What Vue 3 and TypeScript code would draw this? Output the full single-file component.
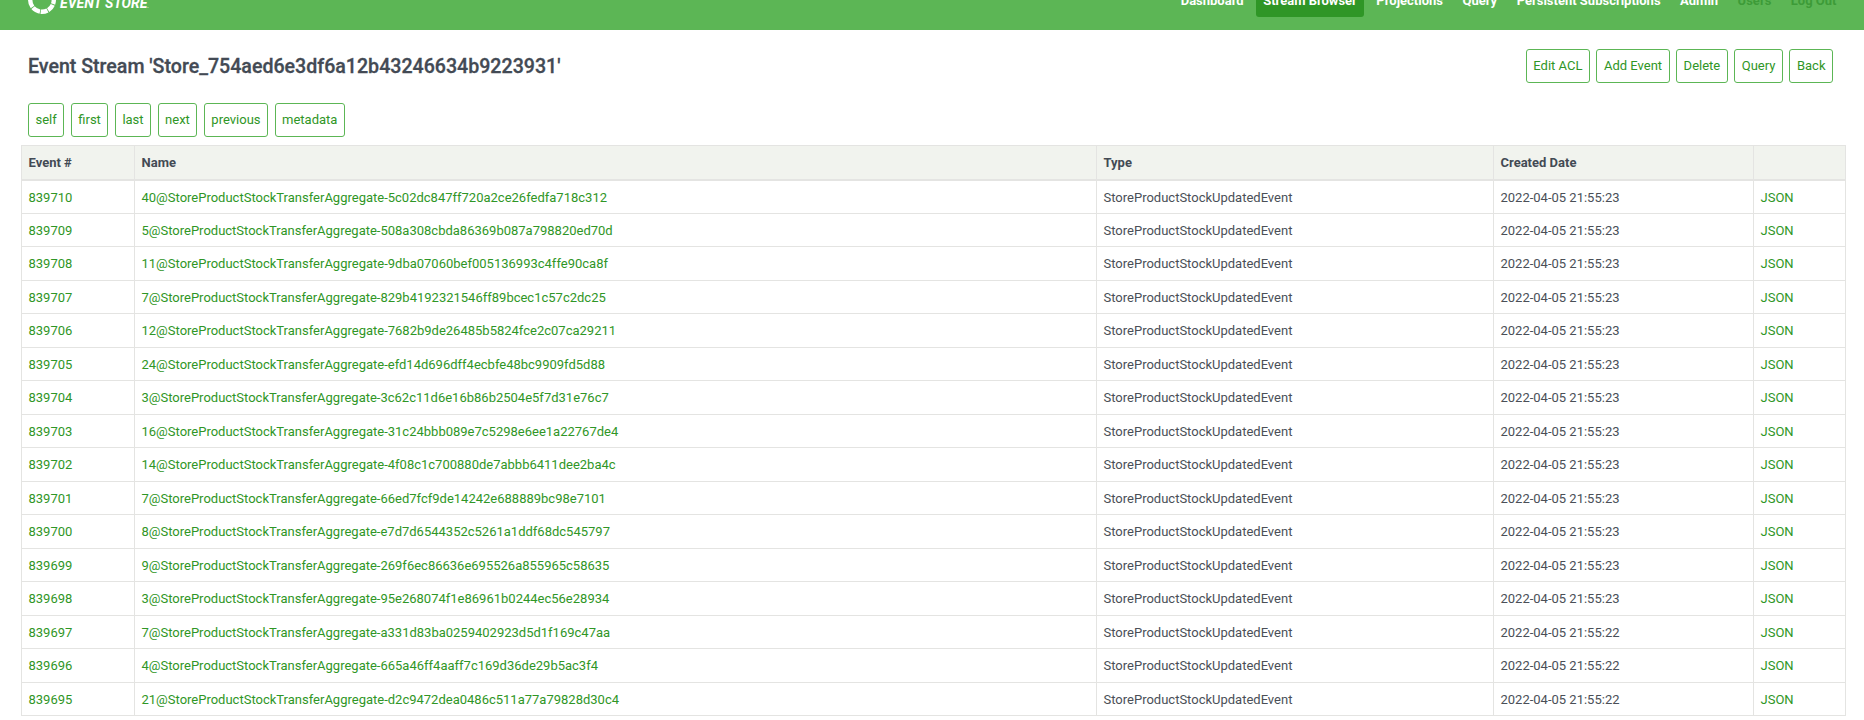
<template>
  <div class="page">
    <header class="topbar">
      <a class="logo" href="#">
        <svg class="ring" width="28" height="16" viewBox="0 0 28 16">
          <path d="M2.2 0A11.8 11.8 0 0 0 25.8 0" fill="none" stroke="#fff" stroke-width="4.4" stroke-dasharray="7.5 0.8 8 0.8 7 0.8 7 0.8 9" />
        </svg>
        <span class="logo-text">EVENT STORE<small>.</small></span>
      </a>
      <nav class="nav">
        <a
          v-for="item in navItems"
          :key="item.label"
          href="#"
          :class="['nav-link', { active: item.active, muted: item.muted }]"
        >{{ item.label }}</a>
      </nav>
    </header>

    <main class="content">
      <div class="title-row">
        <h1>Event Stream 'Store_754aed6e3df6a12b43246634b9223931'</h1>
        <div class="btn-group">
          <a v-for="action in actions" :key="action" class="btn" href="#">{{ action }}</a>
        </div>
      </div>

      <div class="btn-group pager">
        <a v-for="link in pagerLinks" :key="link" class="btn" href="#">{{ link }}</a>
      </div>

      <table class="events">
        <colgroup>
          <col class="col-num" />
          <col class="col-name" />
          <col class="col-type" />
          <col class="col-date" />
          <col />
        </colgroup>
        <thead>
          <tr>
            <th>Event #</th>
            <th>Name</th>
            <th>Type</th>
            <th>Created Date</th>
            <th></th>
          </tr>
        </thead>
        <tbody>
          <tr v-for="row in rows" :key="row.num">
            <td><a href="#">{{ row.num }}</a></td>
            <td><a href="#">{{ row.name }}</a></td>
            <td>{{ eventType }}</td>
            <td>2022-04-05 21:55:{{ row.sec }}</td>
            <td><a href="#">JSON</a></td>
          </tr>
        </tbody>
      </table>
    </main>
  </div>
</template>

<script setup lang="ts">
interface NavItem {
  label: string
  active?: boolean
  muted?: boolean
}

const navItems: NavItem[] = [
  { label: "Dashboard" },
  { label: "Stream Browser", active: true },
  { label: "Projections" },
  { label: "Query" },
  { label: "Persistent Subscriptions" },
  { label: "Admin" },
  { label: "Users", muted: true },
  { label: "Log Out", muted: true },
]

const actions = ["Edit ACL", "Add Event", "Delete", "Query", "Back"]
const pagerLinks = ["self", "first", "last", "next", "previous", "metadata"]
const eventType = "StoreProductStockUpdatedEvent"

const agg = "StoreProductStockTransferAggregate"
const rows = [
  { num: 839710, name: `40@${agg}-5c02dc847ff720a2ce26fedfa718c312`, sec: 23 },
  { num: 839709, name: `5@${agg}-508a308cbda86369b087a798820ed70d`, sec: 23 },
  { num: 839708, name: `11@${agg}-9dba07060bef005136993c4ffe90ca8f`, sec: 23 },
  { num: 839707, name: `7@${agg}-829b4192321546ff89bcec1c57c2dc25`, sec: 23 },
  { num: 839706, name: `12@${agg}-7682b9de26485b5824fce2c07ca29211`, sec: 23 },
  { num: 839705, name: `24@${agg}-efd14d696dff4ecbfe48bc9909fd5d88`, sec: 23 },
  { num: 839704, name: `3@${agg}-3c62c11d6e16b86b2504e5f7d31e76c7`, sec: 23 },
  { num: 839703, name: `16@${agg}-31c24bbb089e7c5298e6ee1a22767de4`, sec: 23 },
  { num: 839702, name: `14@${agg}-4f08c1c700880de7abbb6411dee2ba4c`, sec: 23 },
  { num: 839701, name: `7@${agg}-66ed7fcf9de14242e688889bc98e7101`, sec: 23 },
  { num: 839700, name: `8@${agg}-e7d7d6544352c5261a1ddf68dc545797`, sec: 23 },
  { num: 839699, name: `9@${agg}-269f6ec86636e695526a855965c58635`, sec: 23 },
  { num: 839698, name: `3@${agg}-95e268074f1e86961b0244ec56e28934`, sec: 23 },
  { num: 839697, name: `7@${agg}-a331d83ba0259402923d5d1f169c47aa`, sec: 22 },
  { num: 839696, name: `4@${agg}-665a46ff4aaff7c169d36de29b5ac3f4`, sec: 22 },
  { num: 839695, name: `21@${agg}-d2c9472dea0486c511a77a79828d30c4`, sec: 22 },
]
</script>

<style>
html,
body {
  overflow: hidden;
  background: #fff;
}
</style>

<style scoped>
.page {
  font-family: Roboto, "Liberation Sans", sans-serif;
  font-size: 13px;
  color: #4a4f57;
  height: 720px;
  overflow: hidden;
}

a {
  color: #2f9626;
  text-decoration: none;
}

.topbar {
  height: 30px;
  background: #5cb655;
  display: flex;
  justify-content: space-between;
  align-items: flex-start;
  padding: 0 20px 0 28px;
  overflow: hidden;
}

.logo {
  display: flex;
  align-items: flex-start;
  gap: 4px;
  color: #fff;
}

.ring {
  flex: none;
}

.logo-text {
  font-size: 14px;
  font-weight: 700;
  font-style: italic;
  line-height: 16px;
  margin-top: -5px;
  white-space: nowrap;
}

.logo-text small {
  font-size: 7px;
  opacity: 0.6;
}

.nav {
  display: flex;
  gap: 4.5px;
  height: 17px;
  align-items: flex-end;
}

.nav-link {
  color: #fff;
  font-weight: 700;
  line-height: 17px;
  padding: 0 7.5px 8px;
  border-radius: 0 0 3px 3px;
  white-space: nowrap;
}

.nav-link.active {
  background: #2f9626;
}

.nav-link.muted {
  color: #3d9b38;
}

.content {
  padding: 19px 31px 0 21px;
}

.title-row {
  display: flex;
  justify-content: space-between;
  align-items: center;
  height: 34px;
  padding-left: 7px;
}

h1 {
  margin: 0;
  font-size: 19.6px;
  font-weight: 500;
  color: #434a54;
  -webkit-text-stroke: 0.3px #434a54;
}

.btn-group {
  display: flex;
  gap: 6.5px;
}

.pager {
  margin: 20px 0 8px 7px;
}

.btn {
  display: block;
  height: 34px;
  line-height: 32px;
  padding: 0 6.5px;
  border: 1px solid #5cb655;
  border-radius: 3px;
  white-space: nowrap;
  box-sizing: border-box;
}

.events {
  width: 1825px;
  table-layout: fixed;
  border-collapse: collapse;
  border: 1px solid #e4e4e2;
}

.col-num {
  width: 113px;
}

.col-name {
  width: 962px;
}

.col-type {
  width: 397px;
}

.col-date {
  width: 260px;
}

th,
td {
  border: 1px solid #e4e4e2;
  padding: 0 7px 0 6.5px;
  height: 33.5px;
  text-align: left;
  white-space: nowrap;
  box-sizing: border-box;
}

td {
  padding-top: 1px;
}

th {
  background: #f1f3ee;
  color: #434a54;
  font-weight: 700;
  height: 34px;
  border-bottom-width: 2px;
}
</style>
